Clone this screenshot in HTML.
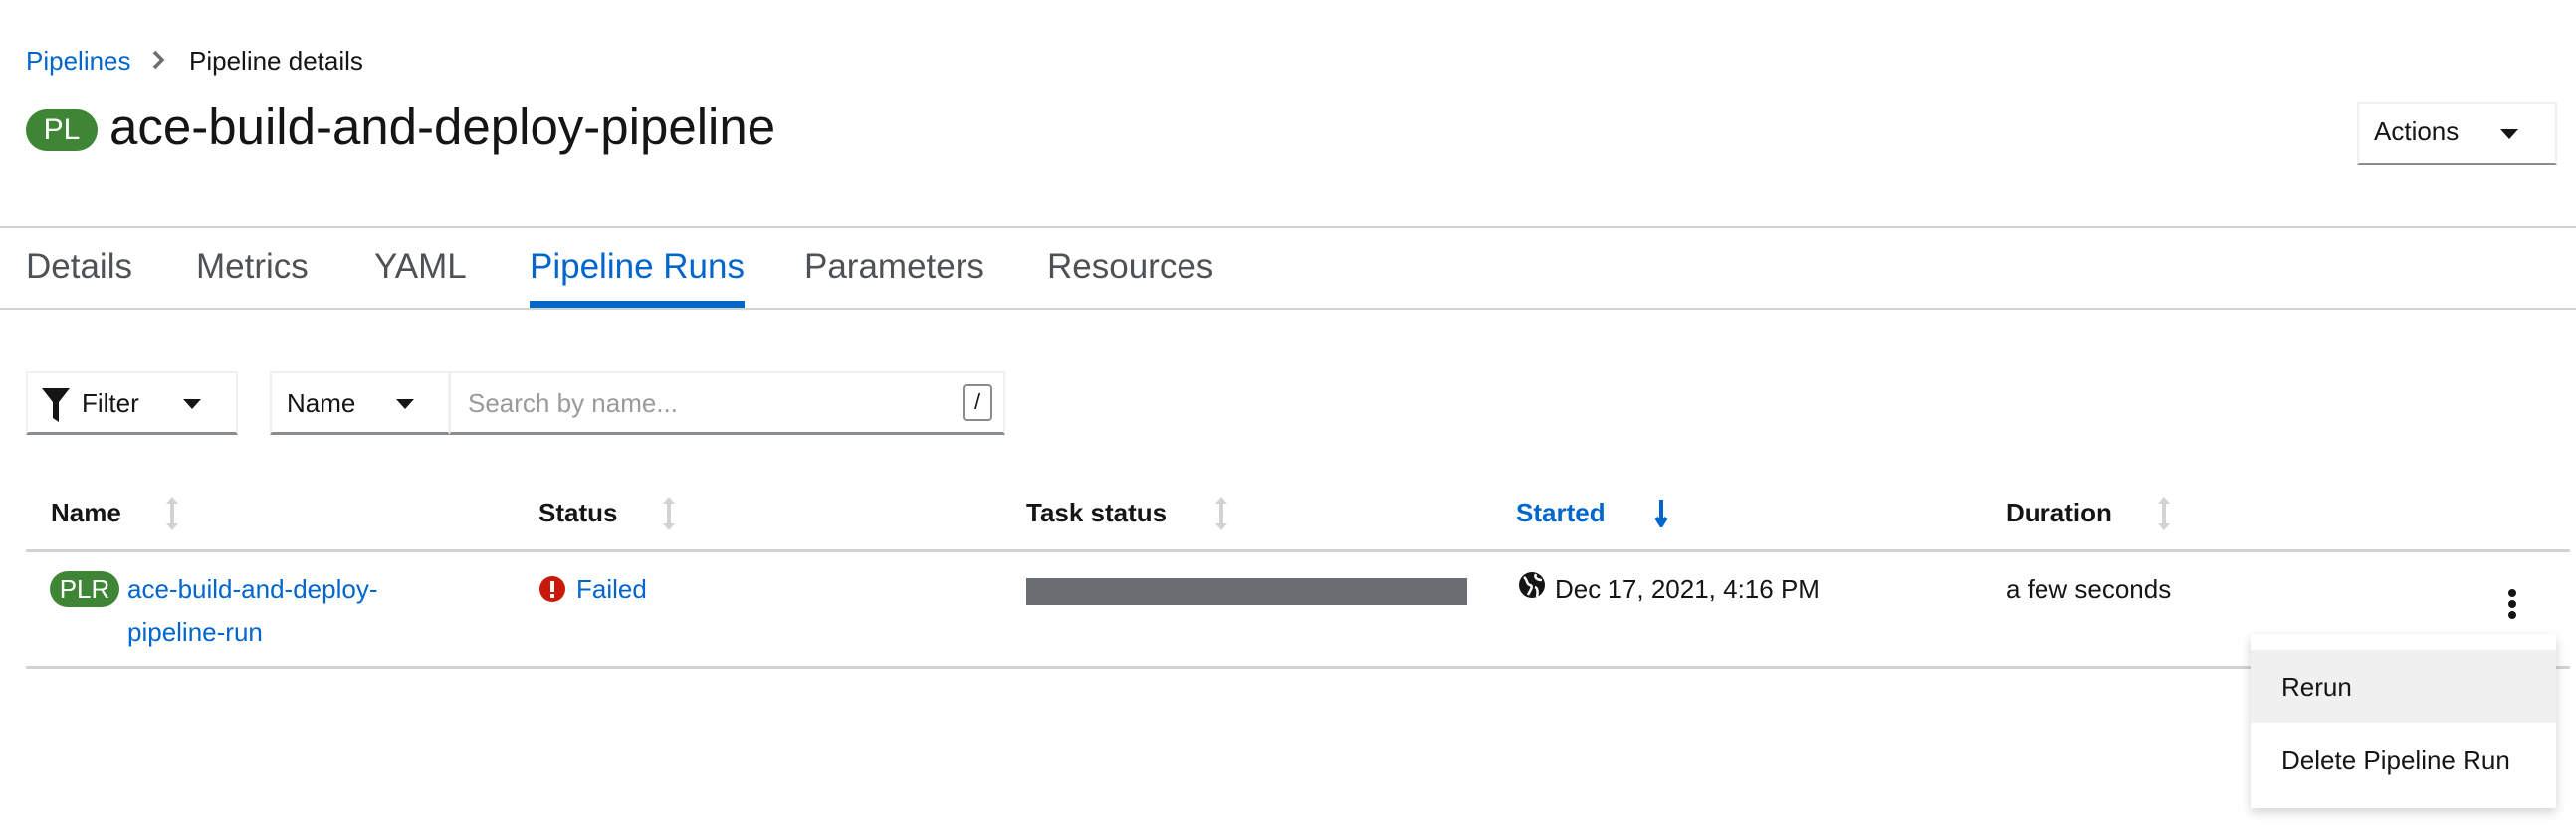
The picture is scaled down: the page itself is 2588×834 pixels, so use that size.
<!DOCTYPE html>
<html><head><meta charset="utf-8"><style>
*{box-sizing:border-box;margin:0;padding:0}
body{width:2588px;height:834px;background:#fff;font-family:"Liberation Sans",sans-serif;color:#151515;position:relative;overflow:hidden}
.a{position:absolute;white-space:nowrap}
.blue{color:#0066cc}
.badge{position:absolute;background:#3e8635;color:#fff;border-radius:30px;text-align:center}
.hdr{font-weight:bold;font-size:26px}
.sort{position:absolute;width:4px;height:26px;background:#d2d2d2}
.sort:before,.sort:after{content:"";position:absolute;left:-4px;border-left:6px solid transparent;border-right:6px solid transparent}
.sort:before{top:-4px;border-bottom:7px solid #d2d2d2}
.sort:after{bottom:-4px;border-top:7px solid #d2d2d2}
.caret{position:absolute;width:0;height:0;border-left:9px solid transparent;border-right:9px solid transparent;border-top:10px solid #151515}
</style></head><body>
<div class="a blue" style="left:26px;top:46px;font-size:26px">Pipelines</div>
<svg class="a" style="left:152px;top:50px" width="14" height="20"><path d="M3 2L11 10L3 18" stroke="#6a6e73" stroke-width="3.5" fill="none"/></svg>
<div class="a" style="left:190px;top:46px;font-size:26px">Pipeline details</div>
<div class="badge" style="left:26px;top:110px;width:72px;height:42px;font-size:30px;line-height:42px">PL</div>
<div class="a" style="left:110px;top:98px;font-size:51px">ace-build-and-deploy-pipeline</div>
<div class="a" style="left:2368px;top:102px;width:201px;height:64px;border:2px solid #f0f0f0;border-bottom:2px solid #8a8d90"></div>
<div class="a" style="left:2385px;top:117px;font-size:26px">Actions</div>
<div class="caret" style="left:2512px;top:130px"></div>
<div class="a" style="left:0;top:227px;width:2588px;height:2px;background:#d2d2d2"></div>
<div class="a" style="left:0;top:309px;width:2588px;height:2px;background:#d2d2d2"></div>
<div class="a" style="left:26px;top:248px;font-size:35px;color:#4f5255">Details</div>
<div class="a" style="left:197px;top:248px;font-size:35px;color:#4f5255">Metrics</div>
<div class="a" style="left:376px;top:248px;font-size:35px;color:#4f5255">YAML</div>
<div class="a blue" style="left:532px;top:248px;font-size:35px">Pipeline Runs</div>
<div class="a" style="left:532px;top:302px;width:216px;height:7px;background:#0066cc"></div>
<div class="a" style="left:808px;top:248px;font-size:35px;color:#4f5255">Parameters</div>
<div class="a" style="left:1052px;top:248px;font-size:35px;color:#4f5255">Resources</div>
<div class="a" style="left:26px;top:373px;width:213px;height:64px;border:2px solid #f0f0f0;border-bottom:3px solid #8a8d90"></div>
<svg class="a" style="left:42px;top:390px" width="28" height="34" viewBox="0 0 28 34"><path d="M0 0H28L17 14V34L11 30V14Z" fill="#151515"/></svg>
<div class="a" style="left:82px;top:390px;font-size:26px">Filter</div>
<div class="caret" style="left:184px;top:401px"></div>
<div class="a" style="left:271px;top:373px;width:181px;height:64px;border:2px solid #f0f0f0;border-bottom:3px solid #8a8d90"></div>
<div class="a" style="left:288px;top:390px;font-size:26px">Name</div>
<div class="caret" style="left:398px;top:401px"></div>
<div class="a" style="left:451px;top:373px;width:559px;height:64px;border:2px solid #f0f0f0;border-bottom:3px solid #8a8d90"></div>
<div class="a" style="left:470px;top:390px;font-size:26px;color:#9a9a9a">Search by name...</div>
<div class="a" style="left:967px;top:386px;width:30px;height:37px;border:2px solid #8a8d90;border-radius:4px;font-size:22px;text-align:center;line-height:32px;color:#151515">/</div>
<div class="a hdr" style="left:51px;top:500px">Name</div><div class="sort" style="left:171px;top:503px"></div>
<div class="a hdr" style="left:541px;top:500px">Status</div><div class="sort" style="left:670px;top:503px"></div>
<div class="a hdr" style="left:1031px;top:500px">Task status</div><div class="sort" style="left:1225px;top:503px"></div>
<div class="a hdr blue" style="left:1523px;top:500px">Started</div>
<svg class="a" style="left:1662px;top:502px" width="14" height="28"><path d="M7 0V24M2 18L7 26L12 18" stroke="#0066cc" stroke-width="4" fill="#0066cc"/></svg>
<div class="a hdr" style="left:2015px;top:500px">Duration</div><div class="sort" style="left:2172px;top:503px"></div>
<div class="a" style="left:26px;top:552px;width:2556px;height:3px;background:#d2d2d2"></div>
<div class="a" style="left:26px;top:669px;width:2556px;height:3px;background:#d2d2d2"></div>
<div class="badge" style="left:50px;top:574px;width:70px;height:36px;font-size:26px;line-height:36px">PLR</div>
<div class="a blue" style="left:128px;top:571px;font-size:26px;line-height:43px">ace-build-and-deploy-<br>pipeline-run</div>
<svg class="a" style="left:541px;top:578px" width="28" height="28"><circle cx="14" cy="14" r="13" fill="#c9190b"/><rect x="12" y="6" width="4" height="11" fill="#fff"/><rect x="12" y="19" width="4" height="4" fill="#fff"/></svg>
<div class="a blue" style="left:579px;top:577px;font-size:26px">Failed</div>
<div class="a" style="left:1031px;top:581px;width:443px;height:27px;background:#6a6e73"></div>
<svg class="a" style="left:1525px;top:574px" width="28" height="28"><circle cx="14" cy="14" r="13" fill="#151515"/><path d="M6 6C10 9 8 13 12 14S12 20 10 24M18 3C16 7 20 9 24 9M17 16C20 17 20 22 19 26" stroke="#fff" stroke-width="2.5" fill="none"/></svg>
<div class="a" style="left:1562px;top:577px;font-size:26px">Dec 17, 2021, 4:16 PM</div>
<div class="a" style="left:2015px;top:577px;font-size:26px">a few seconds</div>
<div class="a" style="left:2520px;top:592px;width:8px;height:8px;border-radius:4px;background:#151515"></div>
<div class="a" style="left:2520px;top:603px;width:8px;height:8px;border-radius:4px;background:#151515"></div>
<div class="a" style="left:2520px;top:614px;width:8px;height:8px;border-radius:4px;background:#151515"></div>
<div class="a" style="left:2261px;top:637px;width:307px;height:175px;background:#fff;box-shadow:0 4px 10px rgba(0,0,0,.18)"></div>
<div class="a" style="left:2261px;top:653px;width:307px;height:73px;background:#f0f0f0"></div>
<div class="a" style="left:2292px;top:675px;font-size:26px">Rerun</div>
<div class="a" style="left:2292px;top:749px;font-size:26px">Delete Pipeline Run</div>
</body></html>
